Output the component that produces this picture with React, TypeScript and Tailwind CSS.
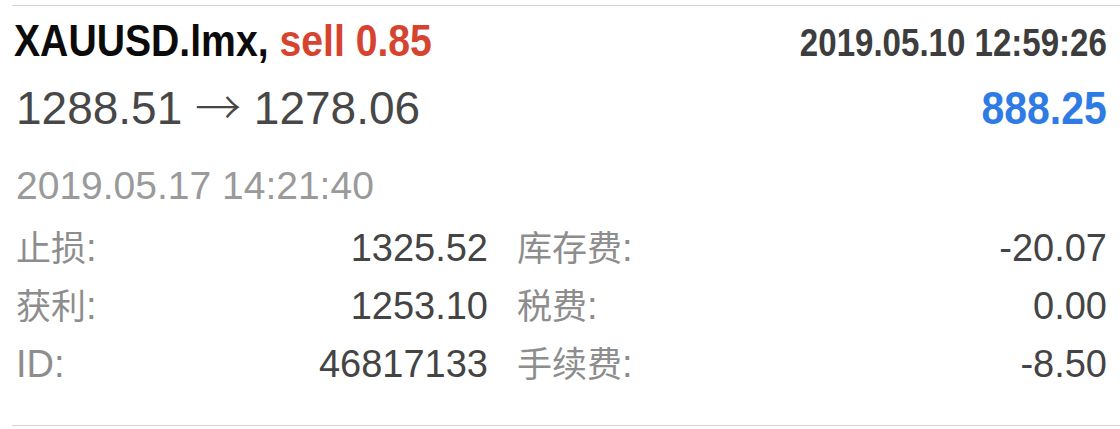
import React from 'react';

const sans = "font-['Liberation_Sans','Noto_Sans_CJK_SC',sans-serif]";

const rows = [
  { l1: '止损', v1: '1325.52', l2: '库存费', v2: '-20.07' },
  { l1: '获利', v1: '1253.10', l2: '税费', v2: '0.00' },
  { l1: 'ID', v1: '46817133', l2: '手续费', v2: '-8.50' },
];

function Label({ text }: { text: string }) {
  // CJK glyphs run a bit smaller than the latin text in the original
  const cjk = /[\u4e00-\u9fff]/.test(text);
  return (
    <span className="text-[#8d8d8d]">
      <span className={cjk ? 'text-[35px]' : ''}>{text}</span>:
    </span>
  );
}

export default function App() {
  return (
    <div className={`w-[1120px] h-[429px] bg-white pt-[5px] pl-3 flex flex-col overflow-hidden ${sans}`}>
      <div className="border-t border-[#d2d2d2]" />
      <div className="pl-1 pr-[13px]">
        {/* symbol + open time */}
        <div className="mt-[7px] flex items-baseline justify-between leading-[56px] font-bold">
          <span className="-ml-[2px] inline-block origin-left scale-x-[0.89] text-[44px] whitespace-nowrap text-[#0b0b0b]">
            XAUUSD.lmx, <span className="text-[#d6442f]">sell 0.85</span>
          </span>
          <span className="inline-block origin-right scale-x-[0.87] text-[38px] text-[#3d3d3d]">
            2019.05.10 12:59:26
          </span>
        </div>

        {/* prices + profit */}
        <div className="mt-[3px] flex items-baseline justify-between leading-[60px]">
          <span className="text-[46px] text-[#474747]">
            1288.51{' '}
            <span className="font-['Noto_Sans_CJK_SC',sans-serif] font-light">→</span> 1278.06
          </span>
          <span className="inline-block origin-right scale-x-[0.89] text-[46px] font-bold text-[#2e7be6]">
            888.25
          </span>
        </div>

        {/* close time */}
        <div className="mt-[23px] text-[39px] leading-[50px] text-[#9a9a9a]">2019.05.17 14:21:40</div>

        {/* details */}
        <div className="mt-[8px] grid grid-cols-[472px_1fr] auto-rows-[58px] gap-x-[29px] text-[38px] leading-[58px]">
          {rows.map((r) => (
            <React.Fragment key={r.l1}>
              <div className="flex items-baseline justify-between">
                <Label text={r.l1} />
                <span className="text-[#444]">{r.v1}</span>
              </div>
              <div className="flex items-baseline justify-between">
                <Label text={r.l2} />
                <span className="text-[#444]">{r.v2}</span>
              </div>
            </React.Fragment>
          ))}
        </div>
      </div>
      <div className="mt-auto mb-[3px] border-t border-[#d2d2d2]" />
    </div>
  );
}
